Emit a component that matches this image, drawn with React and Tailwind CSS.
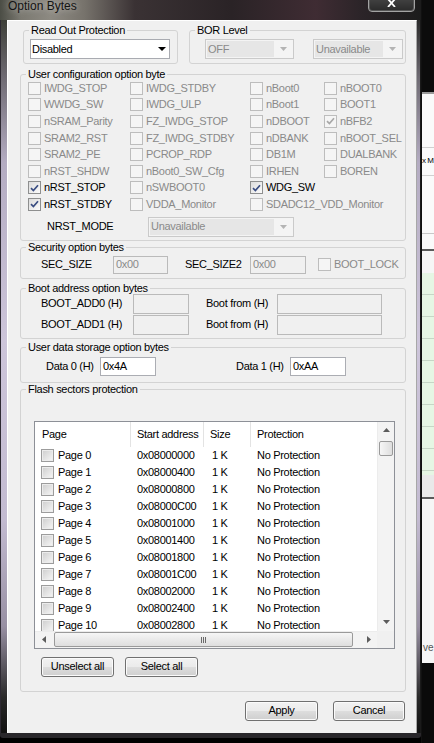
import React from 'react';

const font = "font-['Liberation_Sans',Arial,sans-serif]";
const gray = 'text-[#8a8a8a]';

function Check({ checked, enabled }) {
  return (
    <span
      className={`w-[13px] h-[13px] shrink-0 border flex items-center justify-center ${
        enabled ? 'border-[#8e8f8f] bg-[linear-gradient(135deg,#dcdcdc,#fbfbfb)]' : 'border-[#bdbdbd] bg-[#f5f5f5]'
      }`}
    >
      {checked && (
        <svg width="9" height="8" viewBox="0 0 9 8">
          <path d="M1 4.2 L3.4 6.6 L8 1.2" fill="none" stroke={enabled ? '#3a4d82' : '#a8a8a8'} strokeWidth="1.7" />
        </svg>
      )}
    </span>
  );
}

function Combo({ value, enabled, className }) {
  if (enabled) {
    return (
      <div className={`h-[20px] border border-[#a9abb1] bg-white flex items-center ${className}`}>
        <span className="flex-1 pl-[1px] text-black">{value}</span>
        <svg width="8" height="4" className="mr-[3px]">
          <path d="M0 0 H8 L4 4 Z" fill="#000" />
        </svg>
      </div>
    );
  }
  return (
    <div className={`h-[20px] border border-[#cacaca] bg-[#f4f4f4] flex items-stretch p-[1px] ${className}`}>
      <span className={`flex-1 bg-[#e6e6e6] pl-[1px] flex items-center ${gray}`}>{value}</span>
      <span className="w-[18px] flex items-center justify-center">
        <svg width="7" height="4">
          <path d="M0 0 H7 L3.5 4 Z" fill="#b4b4b4" />
        </svg>
      </span>
    </div>
  );
}

function Field({ value, enabled, className }) {
  return (
    <div
      className={`border flex items-center pl-[2px] ${
        enabled ? 'bg-white border-[#abadb3] text-black' : `bg-[#f0f0f0] border-[#bababa] ${gray}`
      } ${className}`}
    >
      {value}
    </div>
  );
}

function Group({ title, className, children }) {
  return (
    <fieldset className={`border border-[#d3d3d3] rounded-[3px] ${className}`}>
      <legend className="ml-[5px] px-[2px] leading-[13px] text-black">{title}</legend>
      {children}
    </fieldset>
  );
}

function Btn({ children, className }) {
  return (
    <div
      className={`h-[20px] border border-[#707070] rounded-[3px] bg-[linear-gradient(180deg,#f2f2f2_0%,#ebebeb_48%,#dddddd_52%,#cfcfcf_100%)] shadow-[inset_0_0_0_1px_#fbfbfb] flex items-center justify-center text-black ${className}`}
    >
      {children}
    </div>
  );
}

const configRows = [
  [['IWDG_STOP'], ['IWDG_STDBY'], ['nBoot0'], ['nBOOT0']],
  [['WWDG_SW'], ['IWDG_ULP'], ['nBoot1'], ['BOOT1']],
  [['nSRAM_Parity'], ['FZ_IWDG_STOP'], ['nDBOOT'], ['nBFB2', true]],
  [['SRAM2_RST'], ['FZ_IWDG_STDBY'], ['nDBANK'], ['nBOOT_SEL']],
  [['SRAM2_PE'], ['PCROP_RDP'], ['DB1M'], ['DUALBANK']],
  [['nRST_SHDW'], ['nBoot0_SW_Cfg'], ['IRHEN'], ['BOREN']],
  [['nRST_STOP', true, true], ['nSWBOOT0'], ['WDG_SW', true, true], null],
  [['nRST_STDBY', true, true], ['VDDA_Monitor'], ['SDADC12_VDD_Monitor'], null],
];

const pages = Array.from({ length: 11 }, (_, i) => ({
  name: `Page ${i}`,
  addr: '0x' + (0x08000000 + i * 0x400).toString(16).toUpperCase().padStart(8, '0'),
}));

function Arrow({ dir }) {
  if (dir === 'left' || dir === 'right') {
    return (
      <svg width="4" height="7">
        <path d={dir === 'left' ? 'M4 0 L0 3.5 L4 7 Z' : 'M0 0 L4 3.5 L0 7 Z'} fill="#5c5c5c" />
      </svg>
    );
  }
  return (
    <svg width="7" height="4">
      <path d={dir === 'up' ? 'M0 4 L3.5 0 L7 4 Z' : 'M0 0 L7 0 L3.5 4 Z'} fill="#5c5c5c" />
    </svg>
  );
}

function PageCheck() {
  return (
    <span className="w-[13px] h-[13px] shrink-0 border border-[#9c9c9c] bg-[linear-gradient(135deg,#cdcdcd,#f7f7f7)] shadow-[inset_0_0_0_1px_#ececec]" />
  );
}

function ListView() {
  return (
    <div className="w-[361px] h-[228px] border border-[#8d9097] bg-white flex">
      <div className="w-[342px] flex flex-col">
        <div className="h-[25px] flex items-center text-black shrink-0">
          <div className="w-[96px] h-full border-r border-[#e3e3e3] pl-[7px] flex items-center">Page</div>
          <div className="w-[73px] h-full border-r border-[#e3e3e3] pl-[6px] flex items-center">Start address</div>
          <div className="w-[47px] h-full border-r border-[#e3e3e3] pl-[6px] flex items-center">Size</div>
          <div className="flex-1 h-full pl-[6px] flex items-center">Protection</div>
        </div>
        <div className="h-[184px] overflow-hidden">
          {pages.map((p) => (
            <div key={p.name} className="h-[17px] flex items-center text-black whitespace-nowrap">
              <div className="w-[96px] pl-[6px] flex items-center gap-[4px]">
                <PageCheck />
                {p.name}
              </div>
              <div className="w-[73px] pl-[6px]">{p.addr}</div>
              <div className="w-[47px] pl-[8px]">1 K</div>
              <div className="flex-1 pl-[6px]">No Protection</div>
            </div>
          ))}
        </div>
        <div className="h-[17px] flex bg-[#f3f3f3] border-t border-[#ececec]">
          <div className="w-[17px] flex items-center justify-center">
            <Arrow dir="left" />
          </div>
          <div className="flex-1 flex items-center pl-[2px]">
            <div className="w-[299px] h-[15px] rounded-[2px] border border-[#9a9a9a] bg-[linear-gradient(180deg,#f6f6f6,#dedede)] flex items-center justify-center gap-[1px]">
              <span className="w-[1px] h-[6px] bg-[#6a6a6a]" />
              <span className="w-[1px] h-[6px] bg-[#6a6a6a]" />
              <span className="w-[1px] h-[6px] bg-[#6a6a6a]" />
            </div>
          </div>
          <div className="w-[17px] flex items-center justify-center">
            <Arrow dir="right" />
          </div>
        </div>
      </div>
      <div className="w-[17px] flex flex-col">
        <div className="h-[209px] flex flex-col bg-[#f3f3f3] border-l border-[#ececec]">
          <div className="h-[17px] flex items-center justify-center">
            <Arrow dir="up" />
          </div>
          <div className="mt-[2px] mx-[1px] h-[15px] rounded-[2px] border border-[#9a9a9a] bg-[linear-gradient(90deg,#f6f6f6,#dedede)]" />
          <div className="mt-auto h-[17px] flex items-center justify-center">
            <Arrow dir="down" />
          </div>
        </div>
        <div className="h-[17px] bg-[#f0f0f0]" />
      </div>
    </div>
  );
}

function Content() {
  return (
    <div className="w-[410px] bg-[#f0f0f0] border-t border-l border-r border-white border-r-[#a7a7a7] pt-[3px] text-black">
      <div className="flex">
        <Group title="Read Out Protection" className="ml-[15px] w-[155px] pb-[4px]">
          <div className="pt-[2px] pl-[6px]">
            <Combo enabled value="Disabled" className="w-[140px]" />
          </div>
        </Group>
        <Group title="BOR Level" className="ml-[11px] w-[217px] pb-[4px]">
          <div className="pt-[2px] pl-[15px] flex gap-[19px]">
            <Combo value="OFF" className="w-[89px]" />
            <Combo value="Unavailable" className="w-[90px]" />
          </div>
        </Group>
      </div>

      <Group title="User configuration option byte" className="ml-[12px] mt-[4px] w-[386px] pb-[3px]">
        <div className="grid grid-cols-[102px_120px_74px_1fr] pl-[7px] -mt-[1px]">
          {configRows.flat().map((c, i) =>
            c ? (
              <div
                key={i}
                className={`h-[16.6px] flex items-center gap-[3px] whitespace-nowrap ${c[2] ? 'text-black' : gray}`}
              >
                <Check checked={c[1]} enabled={c[2]} />
                {c[0]}
              </div>
            ) : (
              <div key={i} />
            )
          )}
        </div>
        <div className="mt-[4px] pl-[26px] flex items-center">
          <span className="w-[101px]">NRST_MODE</span>
          <Combo value="Unavailable" className="w-[146px]" />
        </div>
      </Group>

      <Group title="Security option bytes" className="ml-[12px] w-[386px] pb-[4px]">
        <div className="pt-[2px] pl-[20px] flex items-center">
          <span className="w-[72px]">SEC_SIZE</span>
          <Field value="0x00" className="w-[55px] h-[18px]" />
          <span className="ml-[17px] w-[65px]">SEC_SIZE2</span>
          <Field value="0x00" className="w-[56px] h-[18px]" />
          <span className={`ml-[12px] flex items-center gap-[3px] ${gray}`}>
            <Check />
            BOOT_LOCK
          </span>
        </div>
      </Group>

      <Group title="Boot address option bytes" className="ml-[12px] mt-[3px] w-[386px] pb-[3px]">
        <div className="-mt-[1px] pl-[20px] flex flex-col gap-[1px]">
          {['BOOT_ADD0 (H)', 'BOOT_ADD1 (H)'].map((l) => (
            <div key={l} className="flex items-center">
              <span className="w-[92px]">{l}</span>
              <Field value="" className="w-[56px] h-[20px]" />
              <span className="ml-[17px] w-[71px]">Boot from (H)</span>
              <Field value="" className="w-[105px] h-[20px]" />
            </div>
          ))}
        </div>
      </Group>

      <Group title="User data storage option bytes" className="ml-[12px] mt-[2px] w-[386px] pb-[6px]">
        <div className="pt-[3px] pl-[25px] flex items-center">
          <span className="w-[54px]">Data 0 (H)</span>
          <Field enabled value="0x4A" className="w-[56px] h-[19px]" />
          <span className="ml-[80px] w-[54px]">Data 1 (H)</span>
          <Field enabled value="0xAA" className="w-[56px] h-[19px]" />
        </div>
      </Group>

      <Group title="Flash sectors protection" className="ml-[12px] w-[386px] pb-[14px]">
        <div className="pt-[25px] pl-[13px]">
          <ListView />
        </div>
        <div className="mt-[8px] pl-[20px] flex">
          <Btn className="w-[73px]">Unselect all</Btn>
          <Btn className="ml-[11px] w-[73px]">Select all</Btn>
        </div>
      </Group>

      <div className="mt-[9px] pl-[237px] flex">
        <Btn className="w-[73px]">Apply</Btn>
        <Btn className="ml-[15px] w-[72px]">Cancel</Btn>
      </div>
    </div>
  );
}

function TitleBar() {
  return (
    <div className="h-[20px] flex items-start overflow-hidden bg-[linear-gradient(90deg,#4b4d45_0%,#7b7971_5%,#8d8a82_12%,#77736c_20%,#3a3234_32%,#2a2326_55%,#3f2c33_75%,#2b2428_86%,#1c1c1c_100%)]">
      <span className="ml-[8px] -mt-[1px] text-[12px] leading-[14px] tracking-normal text-[#141414] [text-shadow:0_0_6px_rgba(255,255,255,0.55)]">
        Option Bytes
      </span>
      <div className="ml-auto mr-[6px] -mt-[6px] w-[47px] h-[18px] rounded-b-[4px] border border-[#a3a3a3] bg-[linear-gradient(180deg,#4a4a4a,#2a2a2a)] shadow-[inset_0_0_0_1px_#555] flex items-center justify-center">
        <svg width="9" height="8" viewBox="0 0 9 8" className="mt-[-1px]">
          <path d="M1 0 L8 8 M8 0 L1 8" stroke="#fff" strokeWidth="1.8" />
        </svg>
      </div>
    </div>
  );
}

function RightStrip() {
  return (
    <div className="w-[13px] h-[743px] flex flex-col border-l border-[#111] overflow-hidden tracking-normal">
      <div className="h-[92px] bg-[#0c0c0c]" />
      <div className="h-[2px] bg-[#9a9a9a]" />
      <div className="h-[53px] bg-[#fafafa]" />
      <div className="h-[1px] bg-[#d0d0d0]" />
      <div className="h-[27px] bg-[#fafafa] pt-[7px] text-[8px] leading-[12px] tracking-[-0.5px] text-black whitespace-nowrap">x M</div>
      <div className="h-[1px] bg-[#d0d0d0]" />
      <div className="h-[57px] bg-[#fafafa]" />
      <div className="h-[1px] bg-[#c8c8c8]" />
      <div className="h-[15px] bg-[#fafafa]" />
      <div className="h-[2px] bg-[#5a5a5a]" />
      <div className="h-[22px] bg-[#f6f6f6]" />
      <div className="h-[202px] bg-[repeating-linear-gradient(180deg,#e6f6e4_0px,#e6f6e4_21px,#c6d6c6_21px,#c6d6c6_22px)]" />
      <div className="h-[22px] bg-[#e9e9e9]" />
      <div className="h-[2px] bg-[#5a5a5a]" />
      <div className="h-[142px] bg-[#f6f6f6]" />
      <div className="h-[22px] bg-[#f6f6f6] pl-[1px] text-[10px] leading-[14px] text-[#555] whitespace-nowrap">ve</div>
      <div className="flex-1 bg-[#0a0a0a]" />
    </div>
  );
}

export default function App() {
  return (
    <div className={`w-[434px] h-[743px] bg-black flex overflow-hidden text-[11px] leading-[13px] tracking-[-0.3px] ${font}`}>
      <div className="w-[421px] flex flex-col">
        <TitleBar />
        <div className="h-[713px] flex">
          <div className="w-[7px] border-l border-[#2e2a33] bg-[linear-gradient(180deg,#3d3f38_0%,#6e6a72_8%,#b4acc2_20%,#cdc5da_45%,#c3bbd1_70%,#9890a3_85%,#2a2a2a_95%,#111_100%)]" />
          <Content />
          <div className="w-[4px] border-r border-[#1a1a1a] bg-[linear-gradient(180deg,#2a2a2a_0%,#6e6a72_8%,#b4acc2_20%,#cdc5da_45%,#c3bbd1_70%,#9890a3_85%,#2a2a2a_95%,#111_100%)]" />
        </div>
        <div className="h-[5px] bg-[#29272b] rounded-b-[3px]" />
        <div className="h-[5px] bg-black" />
      </div>
      <RightStrip />
    </div>
  );
}
